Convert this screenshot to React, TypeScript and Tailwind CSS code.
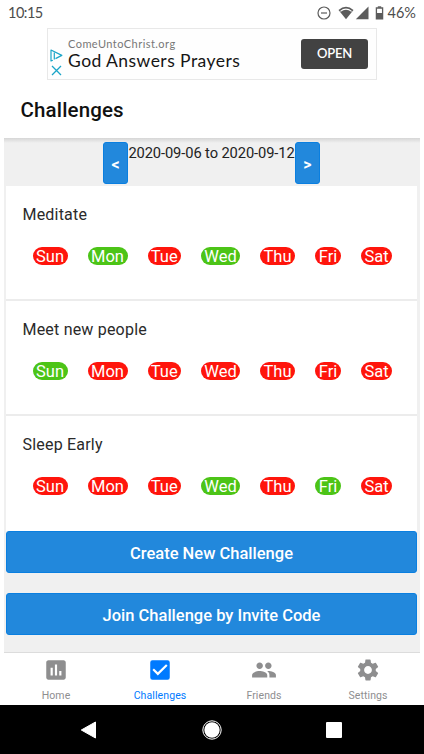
import React from 'react';
import { MdAssessment, MdCheckBox, MdPeople, MdSettings } from 'react-icons/md';
import type { IconType } from 'react-icons';

const DAYS = ['Sun', 'Mon', 'Tue', 'Wed', 'Thu', 'Fri', 'Sat'];

const DAY_WIDTHS = ['w-[35px]', 'w-10', 'w-[33.5px]', 'w-[39px]', 'w-[35px]', 'w-[26px]', 'w-[31px]'];

interface Challenge {
    name: string;
    done: string[];
}

const challenges: Challenge[] = [
    { name: 'Meditate', done: ['Mon', 'Wed'] },
    { name: 'Meet new people', done: ['Sun'] },
    { name: 'Sleep Early', done: ['Wed', 'Fri'] },
];

const tabs: { label: string; icon: IconType; active?: boolean }[] = [
    { label: 'Home', icon: MdAssessment },
    { label: 'Challenges', icon: MdCheckBox, active: true },
    { label: 'Friends', icon: MdPeople },
    { label: 'Settings', icon: MdSettings },
];

function StatusBar() {
    return (
        <div className="flex h-7 items-center justify-between pr-[8px] pb-[3px] pl-[8px] font-[Lato,sans-serif] text-[14.5px] text-[#4d4d4d]">
            <span className="tracking-[-0.5px]">10:15</span>
            <div className="flex items-center">
                <svg width="14" height="14" viewBox="0 0 14 14" fill="none" stroke="#5c5c5c" strokeWidth="1.2" className="mr-[7px]">
                    <circle cx="7" cy="7" r="6" />
                    <path d="M4 7h6" />
                </svg>
                <svg width="16" height="14" viewBox="0 0 16 14" className="mr-px">
                    <path d="M.5 4Q8-2.5 15.5 4L8 13.2Z" fill="#5c5c5c" />
                    <path d="M2.4 5.4Q8 .9 13.6 5.4" fill="none" stroke="#fff" strokeWidth="1.1" />
                </svg>
                <svg width="14" height="14" viewBox="0 0 14 14" className="mr-[6px]">
                    <path d="M13.5.5v12.7H.8Z" fill="#5c5c5c" />
                </svg>
                <svg width="9" height="14" viewBox="0 0 9 14" className="mr-[4px]">
                    <path d="M2.8.3h3.4v1.5H2.8Z" fill="#5c5c5c" />
                    <path d="M1.4 2h6.2v10.8H1.4Z" fill="none" stroke="#5c5c5c" strokeWidth="1.3" />
                    <path d="M1.4 7h6.2v6H1.4Z" fill="#5c5c5c" />
                </svg>
                <span>46%</span>
            </div>
        </div>
    );
}

function AdBanner() {
    return (
        <div className="mx-auto flex h-[52px] w-[330px] border border-[#e8e8e8] bg-[#fefefe] font-[Lato,sans-serif]">
            <div className="flex w-5 flex-col items-start pt-[20px] pl-[2px]">
                <svg width="13" height="13" viewBox="0 0 13 13" fill="none" stroke="#1aa5c8" strokeWidth="1.2" strokeLinejoin="round">
                    <path d="M2.8 11.2 1 12V1l10.8 5.4-6.3 3.2" />
                    <path d="M4.3 3.6v6.8" />
                </svg>
                <svg width="11" height="11" viewBox="0 0 11 11" stroke="#1aa5c8" strokeWidth="1.3" className="mt-[3px] ml-px">
                    <path d="m1 1 9 9M10 1l-9 9" />
                </svg>
            </div>
            <div className="flex-1 pt-[7px] whitespace-nowrap">
                <p className="text-[11px] leading-[15px] tracking-[0.45px] text-[#777]">ComeUntoChrist.org</p>
                <p className="text-[17.5px] leading-[19px] tracking-[0.45px] text-[#151515]">God Answers Prayers</p>
            </div>
            <button className="mt-[10px] mr-[8px] h-[30px] w-[67px] rounded-[3px] bg-[#424242] pb-px text-[13px] font-semibold tracking-[-0.2px] text-white">
                OPEN
            </button>
        </div>
    );
}

function WeekPicker() {
    return (
        <div className="flex h-[48px] justify-center pt-1 text-[14.7px] text-[#222]">
            <button className="h-[42px] w-[25px] rounded-[3px] border border-[#0a7fe0] bg-[#2288dc] pt-[3px] text-base font-bold text-white">
                &lt;
            </button>
            <span className="flex w-[167px] justify-center leading-[22px] tracking-[-0.1px] whitespace-nowrap">2020-09-06 to 2020-09-12</span>
            <button className="h-[42px] w-[25px] rounded-[3px] border border-[#0a7fe0] bg-[#2288dc] pt-[3px] text-base font-bold text-white">
                &gt;
            </button>
        </div>
    );
}

function ChallengeCard({ challenge }: { challenge: Challenge }) {
    return (
        <div className="h-[115px] border-b-2 border-[#ececec] bg-white pt-[18px] pl-[16.5px] last:border-b-0">
            <h2 className="text-[16px] leading-[22px] font-normal tracking-[0.2px] text-[#2a2a2a]">{challenge.name}</h2>
            <div className="mt-[21px] ml-[10px] flex gap-5">
                {DAYS.map((day, i) => (
                    <span
                        key={day}
                        className={`flex h-[17.5px] items-center justify-center rounded-full pt-[2px] text-[16.5px] leading-none text-white ${DAY_WIDTHS[i]} ${
                            challenge.done.includes(day) ? 'bg-[#4cc417]' : 'bg-[#ff150c]'
                        }`}
                    >
                        {day}
                    </span>
                ))}
            </div>
        </div>
    );
}

function ActionButton({ label }: { label: string }) {
    return (
        <button className="block h-[42px] w-full rounded-[3px] border border-[#0a7fe0] bg-[#2288dc] pt-[4px] text-[16.5px] font-medium text-white">
            {label}
        </button>
    );
}

function TabBar() {
    return (
        <div className="mx-1 flex h-[53px] border-t border-[#dcdcdc] bg-white">
            {tabs.map(({ label, icon: Icon, active }) => (
                <div key={label} className={`flex flex-1 flex-col items-center pt-1 ${active ? 'text-[#007aff]' : 'text-[#8e8e8f]'}`}>
                    <Icon size={26} />
                    <span className="mt-[6px] text-[10.5px] leading-[14px] tracking-[0.1px]">{label}</span>
                </div>
            ))}
        </div>
    );
}

function NavigationBar() {
    return (
        <div className="flex h-[49px] items-center justify-between bg-black pr-[82px] pl-[80px]">
            <svg width="17" height="18" viewBox="0 0 17 18">
                <path d="M15.5 1v16L1.3 9Z" fill="#fff" stroke="#fff" strokeLinejoin="round" />
            </svg>
            <svg width="20" height="20" viewBox="0 0 20 20">
                <circle cx="10" cy="10" r="9.2" fill="none" stroke="#fff" strokeWidth="1" />
                <circle cx="10" cy="10" r="7.7" fill="#fff" />
            </svg>
            <div className="size-4 rounded-[1px] bg-white" />
        </div>
    );
}

export default function App() {
    return (
        <div className="flex h-[754px] w-[424px] flex-col overflow-hidden bg-white font-[Roboto,sans-serif]">
            <StatusBar />
            <AdBanner />
            <header className="flex h-[58px] items-center pt-[3px] pl-[20.5px]">
                <h1 className="text-[20.5px] font-medium tracking-[0.15px] text-[#111]">Challenges</h1>
            </header>
            <main className="mx-1 h-[514px] bg-[#f0f0f0] bg-linear-to-b from-[#d6d6d6] from-0% to-[#f0f0f0] to-[5px] pr-[3px] pl-[2px]">
                <WeekPicker />
                <div className="flex flex-col">
                    {challenges.map((challenge) => (
                        <ChallengeCard key={challenge.name} challenge={challenge} />
                    ))}
                </div>
                <div className="flex flex-col gap-5">
                    <ActionButton label="Create New Challenge" />
                    <ActionButton label="Join Challenge by Invite Code" />
                </div>
            </main>
            <TabBar />
            <NavigationBar />
        </div>
    );
}
